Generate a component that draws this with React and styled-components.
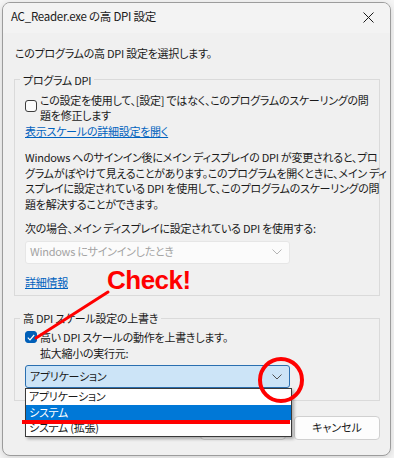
import React from 'react'
import styled, { createGlobalStyle } from 'styled-components'

const GlobalStyle = createGlobalStyle`
    html, body {
        margin: 0;
        padding: 0;
        background: #f6f6f6;
    }
    body {
        font-family: "Noto Sans CJK JP", "Noto Sans", sans-serif;
        font-size: 11px;
        letter-spacing: -0.25px;
        line-height: 15.5px;
        color: #1a1a1a;
        font-feature-settings: "palt";
    }
`

const Page = styled.div`
    position: relative;
    width: 394px;
    height: 458px;
    padding: 2px 0 0 2px;
    box-sizing: border-box;
`

const Window = styled.div`
    width: 389px;
    height: 454px;
    box-sizing: border-box;
    border: 1px solid #9c9c9c;
    border-radius: 8px;
    background: #f0f0f0;
    display: flex;
    flex-direction: column;
    overflow: hidden;
    box-shadow: 0 2px 8px rgba(0, 0, 0, 0.15);
`

const TitleBar = styled.div`
    flex: none;
    height: 28px;
    padding: 0 0 2px 8px;
    display: flex;
    align-items: center;
    justify-content: space-between;
    background: #f3f3f3;
`

const TitleText = styled.span`
    font-size: 11.5px;
`

const CloseButton = styled.div`
    width: 40px;
    height: 100%;
    display: flex;
    align-items: center;
    justify-content: center;
    margin-right: 2px;
`

const Body = styled.div`
    flex: none;
    padding: 0 10px 0 11px;
    display: flex;
    flex-direction: column;
    white-space: nowrap;
`

const Intro = styled.div`
    margin-top: 13px;
    padding-left: 1px;
`

const Group = styled.fieldset`
    margin: ${(p) => p.$top}px 0 0 0;
    padding: ${(p) => p.$padTop}px 10px ${(p) => p.$bottom}px 10px;
    border: 1px solid #dadada;
    border-radius: 0;
    display: flex;
    flex-direction: column;
    min-width: 0;
`

const Legend = styled.legend`
    padding: 0 3px;
    margin-left: -5px;
    line-height: 16px;
`

const CheckRow = styled.div`
    display: flex;
    align-items: flex-start;
    gap: 3px;
`

const Box = styled.span`
    flex: none;
    width: 12px;
    height: 12px;
    margin-top: ${(p) => p.$offset}px;
    border-radius: 3px;
    box-sizing: border-box;
    border: 1px solid ${(p) => (p.$checked ? '#005fb8' : '#3c3c3c')};
    background: ${(p) => (p.$checked ? '#005fb8' : '#fbfbfb')};
    display: flex;
    align-items: center;
    justify-content: center;
`

const Link = styled.a`
    color: #0062be;
    text-decoration: underline;
    margin-top: ${(p) => p.$top || 0}px;
    align-self: flex-start;
`

const Para = styled.div`
    margin-top: ${(p) => p.$top}px;
`

const Combo = styled.div`
    position: relative;
    margin-top: ${(p) => p.$top}px;
    width: 265px;
    height: 23px;
    box-sizing: border-box;
    display: flex;
    align-items: center;
    justify-content: space-between;
    padding: 0 7px 0 4px;
    border-radius: 3px;
    border: 1px solid ${(p) => (p.$open ? '#2a6fb0' : '#e6e6e6')};
    background: ${(p) => (p.$open ? '#cce4f7' : '#fbfbfb')};
    color: ${(p) => (p.$open ? '#1a1a1a' : '#a3a3a3')};
`

const DropList = styled.ul`
    position: absolute;
    left: -1px;
    top: 22px;
    width: 267px;
    margin: 0;
    padding: 0;
    list-style: none;
    background: #fff;
    border: 1px solid #3a3a3a;
    box-sizing: border-box;
    box-shadow: 2px 2px 3px rgba(0, 0, 0, 0.3);
    z-index: 2;
`

const DropItem = styled.li`
    height: 15.5px;
    padding-left: 3px;
    line-height: 15.5px;
    background: ${(p) => (p.$active ? '#0078d7' : '#fff')};
    color: ${(p) => (p.$active ? '#fff' : '#1a1a1a')};
`

const ButtonRow = styled.div`
    margin-top: 15px;
    display: flex;
    justify-content: flex-end;
    gap: 8px;
`

const Button = styled.button`
    width: 86px;
    height: 24px;
    font: inherit;
    color: #1a1a1a;
    background: #fdfdfd;
    border: 1px solid #d0d0d0;
    border-radius: 4px;
    padding: 0;
`

const CheckText = styled.span`
    position: absolute;
    left: 107px;
    top: 264px;
    font-family: "Liberation Sans", Arial, sans-serif;
    font-weight: bold;
    font-size: 26px;
    line-height: 32px;
    color: #ff0000;
    letter-spacing: -0.5px;
    z-index: 5;
`

const Marks = styled.svg`
    position: absolute;
    left: 0;
    top: 0;
    z-index: 4;
    pointer-events: none;
`

function Chevron({ color }) {
    return (
        <svg width="10" height="6" viewBox="0 0 10 6">
            <path d="M0.5 0.5 L5 5 L9.5 0.5" fill="none" stroke={color} strokeWidth="1" />
        </svg>
    )
}

function Tick() {
    return (
        <svg width="8" height="7" viewBox="0 0 8 7">
            <path d="M0.8 3.6 L3 5.8 L7.2 1" fill="none" stroke="#fff" strokeWidth="1.2" />
        </svg>
    )
}

function App() {
    return (
        <Page>
            <GlobalStyle />
            <Window>
                <TitleBar>
                    <TitleText>AC_Reader.exe の高 DPI 設定</TitleText>
                    <CloseButton>
                        <svg width="11" height="11" viewBox="0 0 11 11">
                            <path d="M0.5 0.5 L10.5 10.5 M10.5 0.5 L0.5 10.5" stroke="#1a1a1a" strokeWidth="1" />
                        </svg>
                    </CloseButton>
                </TitleBar>
                <Body>
                    <Intro>このプログラムの高 DPI 設定を選択します。</Intro>

                    <Group $top={10} $padTop={5} $bottom={5}>
                        <Legend>プログラム DPI</Legend>
                        <CheckRow>
                            <Box $offset={7} />
                            <span>
                                この設定を使用して、[設定] ではなく、このプログラムのスケーリングの問
                                <br />
                                題を修正します
                            </span>
                        </CheckRow>
                        <Link>表示スケールの詳細設定を開く</Link>
                        <Para $top={11}>
                            Windows へのサインイン後にメイン ディスプレイの DPI が変更されると、プロ
                            <br />
                            グラムがぼやけて見えることがあります。このプログラムを開くときに、メイン ディ
                            <br />
                            スプレイに設定されている DPI を使用して、このプログラムのスケーリングの問
                            <br />
                            題を解決することができます。
                        </Para>
                        <Para $top={9}>次の場合、メイン ディスプレイに設定されている DPI を使用する:</Para>
                        <Combo $top={4}>
                            <span>Windows にサインインしたとき</span>
                            <Chevron color="#b4b4b4" />
                        </Combo>
                        <Link $top={11}>詳細情報</Link>
                    </Group>

                    <Group $top={14} $padTop={4} $bottom={12}>
                        <Legend>高 DPI スケール設定の上書き</Legend>
                        <CheckRow>
                            <Box $checked $offset={1}>
                                <Tick />
                            </Box>
                            <span>
                                高い DPI スケールの動作を上書きします。
                                <br />
                                拡大縮小の実行元:
                            </span>
                        </CheckRow>
                        <Combo $open $top={4}>
                            <span>アプリケーション</span>
                            <Chevron color="#505050" />
                            <DropList>
                                <DropItem>アプリケーション</DropItem>
                                <DropItem $active>システム</DropItem>
                                <DropItem>システム (拡張)</DropItem>
                            </DropList>
                        </Combo>
                    </Group>

                    <ButtonRow>
                        <Button>OK</Button>
                        <Button>キャンセル</Button>
                    </ButtonRow>
                </Body>
            </Window>

            <CheckText>Check!</CheckText>
            <Marks width="394" height="458" viewBox="0 0 394 458">
                <line x1="108" y1="292" x2="36" y2="338" stroke="#ff0000" strokeWidth="3" strokeLinecap="round" />
                <line x1="22" y1="422" x2="290" y2="422" stroke="#ff0000" strokeWidth="4" />
                <ellipse cx="281" cy="380" rx="21" ry="21" fill="none" stroke="#ff0000" strokeWidth="4" />
            </Marks>
        </Page>
    )
}

export default App
